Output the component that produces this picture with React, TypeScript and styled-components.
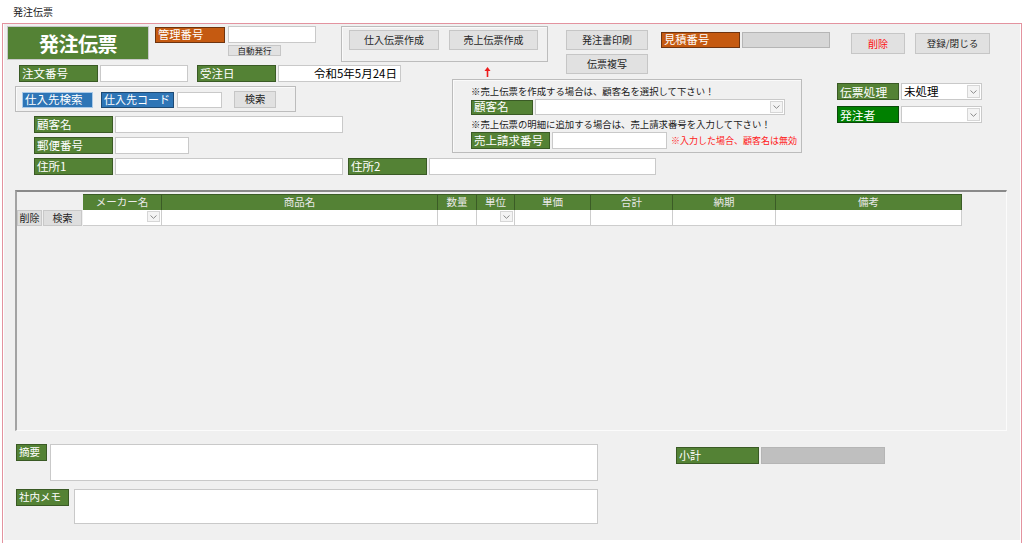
import styled, { createGlobalStyle } from "styled-components";

const jp = `"Noto Sans CJK JP", "Noto Sans", sans-serif`;

type Tone = "green" | "orange" | "blue" | "blueLight" | "bright";

const tones: Record<Tone, { bg: string; border: string }> = {
  green: { bg: "#548235", border: "#3a5a25" },
  orange: { bg: "#c55a11", border: "#6e3410" },
  blue: { bg: "#2e75b6", border: "#1d4a74" },
  blueLight: { bg: "#2e75b6", border: "#a9c9e8" },
  bright: { bg: "#008000", border: "#0b4a0b" },
};

const GlobalStyle = createGlobalStyle`
  html, body {
    margin: 0;
    padding: 0;
    background: #ffffff;
  }
  body {
    font-family: ${jp};
  }
  * {
    box-sizing: border-box;
  }
`;

const Window = styled.div`
  width: 1024px;
  height: 543px;
  background: #ffffff;
  overflow: hidden;
`;

const TitleBar = styled.div`
  height: 23px;
  padding: 7px 0 0 13px;
  font-size: 10px;
  line-height: 10px;
  color: #1a1a1a;
`;

const Frame = styled.div`
  margin-left: 2px;
  width: 1020px;
  height: 520px;
  border-top: 1px solid #e3939f;
  border-left: 1px solid #e3939f;
  border-right: 1px solid #e3939f;
  padding: 0 1px 3px 1px;
`;

const Body = styled.div`
  height: 516px;
  background: #f0f0f0;
  padding-top: 2px;
  font-family: ${jp};
`;

const Band = styled.div<{ $h?: number; $mt?: number }>`
  display: flex;
  align-items: flex-start;
  height: ${(p) => (p.$h ? `${p.$h}px` : "auto")};
  margin-top: ${(p) => p.$mt ?? 0}px;
`;

const Column = styled.div<{ $ml?: number; $mt?: number; $w?: number; $gap?: number }>`
  display: flex;
  flex-direction: column;
  flex: none;
  gap: ${(p) => p.$gap ?? 0}px;
  margin-left: ${(p) => p.$ml ?? 0}px;
  margin-top: ${(p) => p.$mt ?? 0}px;
  width: ${(p) => (p.$w ? `${p.$w}px` : "auto")};
`;

const Row = styled.div<{ $ml?: number; $mt?: number; $gap?: number }>`
  display: flex;
  align-items: center;
  flex: none;
  gap: ${(p) => p.$gap ?? 2}px;
  margin-left: ${(p) => p.$ml ?? 0}px;
  margin-top: ${(p) => p.$mt ?? 0}px;
`;

const TitleBlock = styled.div`
  flex: none;
  margin-left: 3px;
  width: 142px;
  height: 34px;
  background: #548235;
  border: 1px solid #c9c9c9;
  color: #ffffff;
  font-size: 20px;
  font-weight: 700;
  letter-spacing: -0.5px;
  display: flex;
  align-items: center;
  justify-content: center;
`;

const Label = styled.div<{ $w: number; $h?: number; $tone?: Tone; $size?: number; $ml?: number }>`
  flex: none;
  width: ${(p) => p.$w}px;
  height: ${(p) => p.$h ?? 17}px;
  margin-left: ${(p) => p.$ml ?? 0}px;
  background: ${(p) => tones[p.$tone ?? "green"].bg};
  border: 1px solid ${(p) => tones[p.$tone ?? "green"].border};
  color: #ffffff;
  font-size: ${(p) => p.$size ?? 11.5}px;
  line-height: 1;
  display: flex;
  align-items: center;
  padding-left: 2px;
  white-space: nowrap;
  overflow: hidden;
`;

const Field = styled.div<{ $w: number; $h?: number; $fill?: string; $right?: boolean; $ml?: number }>`
  flex: none;
  width: ${(p) => p.$w}px;
  height: ${(p) => p.$h ?? 17}px;
  margin-left: ${(p) => p.$ml ?? 0}px;
  background: ${(p) => p.$fill ?? "#ffffff"};
  border: 1px solid ${(p) => (p.$fill ? "#b5b5b5" : "#c9c9c9")};
  color: #000000;
  font-size: 11.5px;
  line-height: 1;
  display: flex;
  align-items: center;
  justify-content: ${(p) => (p.$right ? "flex-end" : "flex-start")};
  padding: 0 3px 0 2px;
  white-space: nowrap;
`;

const Combo = styled(Field)`
  padding-right: 1px;
`;

const DropBtn = styled.span`
  margin-left: auto;
  width: 13px;
  height: calc(100% - 2px);
  border: 1px solid #d6d6d6;
  background: #f4f4f4;
  display: flex;
  align-items: center;
  justify-content: center;
`;

const Button = styled.button<{ $w: number; $h?: number; $danger?: boolean; $size?: number; $ml?: number }>`
  flex: none;
  width: ${(p) => p.$w}px;
  height: ${(p) => p.$h ?? 20}px;
  margin: 0 0 0 ${(p) => p.$ml ?? 0}px;
  padding: 0;
  background: #e1e1e1;
  border: 1px solid #c6c6c6;
  color: ${(p) => (p.$danger ? "#ff1010" : "#1f1f1f")};
  font-family: ${jp};
  font-size: ${(p) => p.$size ?? 10}px;
  line-height: 1;
  white-space: nowrap;
`;

const GroupBox = styled.div<{ $w: number; $h: number; $ml?: number; $mt?: number }>`
  flex: none;
  width: ${(p) => p.$w}px;
  height: ${(p) => p.$h}px;
  margin-left: ${(p) => p.$ml ?? 0}px;
  margin-top: ${(p) => p.$mt ?? 0}px;
  border: 1px solid #bcbcbc;
  box-shadow: inset 1px 1px 0 #fafafa;
`;

const GroupInner = styled.div<{ $pt: number; $pl: number; $gap: number }>`
  display: flex;
  align-items: center;
  gap: ${(p) => p.$gap}px;
  padding: ${(p) => p.$pt}px 0 0 ${(p) => p.$pl}px;
`;

const NoticeBox = styled.div`
  flex: none;
  width: 350px;
  height: 74px;
  border: 1px solid #bcbcbc;
  box-shadow: inset 1px 1px 0 #fafafa;
  padding: 4px 0 0 18px;
  display: flex;
  flex-direction: column;
`;

const Note = styled.div<{ $red?: boolean; $mt?: number; $size?: number }>`
  font-size: ${(p) => p.$size ?? 9.4}px;
  line-height: 15px;
  height: 15px;
  margin-top: ${(p) => p.$mt ?? 0}px;
  color: ${(p) => (p.$red ? "#ff1a1a" : "#1a1a1a")};
  white-space: nowrap;
`;

const ArrowRow = styled.div`
  height: 14px;
  padding: 2px 0 0 32px;

  svg {
    display: block;
  }
`;

const Sheet = styled.div`
  margin: 15px 0 0 11px;
  width: 992px;
  height: 241px;
  border-top: 2px solid #8a8a8a;
  border-left: 2px solid #a3a3a3;
  border-right: 1px solid #fbfbfb;
  border-bottom: 1px solid #fbfbfb;
  padding-top: 2px;
`;

const SheetGrid = styled.div`
  display: grid;
  grid-template-columns: 66px 79px 276px 39px 38px 76px 82px 103px 186px;
  grid-template-rows: 16px 16px;
`;

const HeadCell = styled.div<{ $blank?: boolean }>`
  background: ${(p) => (p.$blank ? "transparent" : "#548235")};
  border-top: 1px solid ${(p) => (p.$blank ? "transparent" : "#3b5c26")};
  border-right: 1px solid ${(p) => (p.$blank ? "transparent" : "#3b5c26")};
  color: #e9e9e9;
  font-size: 10.5px;
  line-height: 1;
  display: flex;
  align-items: center;
  justify-content: center;
`;

const DataCell = styled.div`
  background: #ffffff;
  border-right: 1px solid #cdcdcd;
  border-bottom: 1px solid #cdcdcd;
  display: flex;
  align-items: stretch;
  justify-content: flex-end;
  padding: 1px;
`;

const RowHead = styled.div`
  display: flex;
  gap: 1px;
`;

const RowBtn = styled.button<{ $w: number }>`
  width: ${(p) => p.$w}px;
  height: 16px;
  margin: 0;
  padding: 0;
  background: #dedede;
  border: 1px solid #c8c8c8;
  font-family: ${jp};
  font-size: 10px;
  line-height: 1;
  color: #1f1f1f;
`;

const Footer = styled.div`
  display: flex;
  align-items: flex-start;
  margin-top: 13px;
`;

const MemoRow = styled.div<{ $mt?: number; $gap: number }>`
  display: flex;
  align-items: flex-start;
  gap: ${(p) => p.$gap}px;
  margin-top: ${(p) => p.$mt ?? 0}px;
`;

const Chevron = () => (
  <svg width="7" height="4" viewBox="0 0 7 4">
    <path d="M0.5 0.5 L3.5 3.3 L6.5 0.5" fill="none" stroke="#8a8a8a" strokeWidth="1" />
  </svg>
);

const UpArrow = () => (
  <svg width="7" height="10" viewBox="0 0 7 10">
    <path d="M3.5 0 L6.5 4 L4.3 4 L4.3 10 L2.7 10 L2.7 4 L0.5 4 Z" fill="#ee1c1c" />
  </svg>
);

const columns = ["メーカー名", "商品名", "数量", "単位", "単価", "合計", "納期", "備考"];
const comboColumns = ["メーカー名", "単位"];

export default function App() {
  return (
    <Window>
      <GlobalStyle />
      <TitleBar>発注伝票</TitleBar>
      <Frame>
        <Body>
          <Band $h={39}>
            <TitleBlock>発注伝票</TitleBlock>
            <Column $ml={6}>
              <Row $gap={3}>
                <Label $w={70} $h={16} $tone="orange" $size={11.3}>
                  管理番号
                </Label>
                <Field $w={88} $h={17} />
              </Row>
              <Button $w={53} $h={11} $size={8.5} $ml={73} style={{ marginTop: 2 }}>
                自動発行
              </Button>
            </Column>
            <GroupBox $w={207} $h={36} $ml={25}>
              <GroupInner $pt={3} $pl={7} $gap={10}>
                <Button $w={90} $h={20}>仕入伝票作成</Button>
                <Button $w={89} $h={20}>売上伝票作成</Button>
              </GroupInner>
            </GroupBox>
            <Column $ml={18} $mt={4} $gap={4}>
              <Button $w={82} $h={20}>発注書印刷</Button>
              <Button $w={82} $h={20}>伝票複写</Button>
            </Column>
            <Row $ml={13} $mt={6} $gap={2}>
              <Label $w={79} $h={16} $tone="orange" $size={11.3}>
                見積番号
              </Label>
              <Field $w={88} $h={16} $fill="#d6d6d6" />
            </Row>
            <Row $ml={21} $mt={7} $gap={10}>
              <Button $w={54} $h={21} $danger>
                削除
              </Button>
              <Button $w={75} $h={21} $size={9.6}>
                登録/閉じる
              </Button>
            </Row>
          </Band>

          <Band $h={88}>
            <Column $w={397}>
              <Row $ml={15} $gap={2}>
                <Label $w={79}>注文番号</Label>
                <Field $w={88} />
                <Label $w={79} $ml={7}>
                  受注日
                </Label>
                <Field $w={123} $right>
                  令和5年5月24日
                </Field>
              </Row>
              <GroupBox $w={281} $h={26} $ml={11} $mt={4}>
                <GroupInner $pt={4} $pl={6} $gap={0}>
                  <Label $w={71} $h={16} $tone="blueLight" $size={11.5}>
                    仕入先検索
                  </Label>
                  <Label $w={73} $h={16} $tone="blue" $size={11} $ml={8}>
                    仕入先コード
                  </Label>
                  <Field $w={45} $h={16} $ml={3} />
                  <Button $w={42} $h={17} $ml={12} $size={10.3}>
                    検索
                  </Button>
                </GroupInner>
              </GroupBox>
              <Row $ml={30} $mt={4}>
                <Label $w={79}>顧客名</Label>
                <Field $w={228} />
              </Row>
              <Row $ml={30} $mt={4}>
                <Label $w={79}>郵便番号</Label>
                <Field $w={74} />
              </Row>
            </Column>

            <Column $ml={51}>
              <ArrowRow>
                <UpArrow />
              </ArrowRow>
              <NoticeBox>
                <Note>※売上伝票を作成する場合は、顧客名を選択して下さい！</Note>
                <Row>
                  <Label $w={62} $h={15}>
                    顧客名
                  </Label>
                  <Combo $w={250} $h={16}>
                    <DropBtn>
                      <Chevron />
                    </DropBtn>
                  </Combo>
                </Row>
                <Note $mt={2}>※売上伝票の明細に追加する場合は、売上請求番号を入力して下さい！</Note>
                <Row>
                  <Label $w={79} $h={17}>
                    売上請求番号
                  </Label>
                  <Field $w={115} $h={17} />
                  <Note $red $size={9} style={{ marginLeft: 2 }}>
                    ※入力した場合、顧客名は無効
                  </Note>
                </Row>
              </NoticeBox>
            </Column>

            <Column $ml={35} $mt={18} $gap={6}>
              <Row>
                <Label $w={62} $size={11.8}>
                  伝票処理
                </Label>
                <Combo $w={81}>
                  未処理
                  <DropBtn>
                    <Chevron />
                  </DropBtn>
                </Combo>
              </Row>
              <Row>
                <Label $w={62} $tone="bright" $size={11.8}>
                  発注者
                </Label>
                <Combo $w={81}>
                  <DropBtn>
                    <Chevron />
                  </DropBtn>
                </Combo>
              </Row>
            </Column>
          </Band>

          <Row $ml={30} $mt={5}>
            <Label $w={79}>住所1</Label>
            <Field $w={228} />
            <Label $w={79} $ml={3}>
              住所2
            </Label>
            <Field $w={227} />
          </Row>

          <Sheet>
            <SheetGrid>
              <HeadCell $blank />
              {columns.map((c) => (
                <HeadCell key={c}>{c}</HeadCell>
              ))}
              <RowHead>
                <RowBtn $w={25}>削除</RowBtn>
                <RowBtn $w={39}>検索</RowBtn>
              </RowHead>
              {columns.map((c) => (
                <DataCell key={c}>
                  {comboColumns.includes(c) && (
                    <DropBtn>
                      <Chevron />
                    </DropBtn>
                  )}
                </DataCell>
              ))}
            </SheetGrid>
          </Sheet>

          <Footer>
            <Column $ml={12}>
              <MemoRow $gap={3}>
                <Label $w={31} $size={10.5}>
                  摘要
                </Label>
                <Field $w={548} $h={37} />
              </MemoRow>
              <MemoRow $gap={5} $mt={8}>
                <Label $w={53} $size={10.5}>
                  社内メモ
                </Label>
                <Field $w={524} $h={35} />
              </MemoRow>
            </Column>
            <Row $ml={78} $mt={3}>
              <Label $w={83} $size={11}>
                小計
              </Label>
              <Field $w={124} $fill="#bfbfbf" />
            </Row>
          </Footer>
        </Body>
      </Frame>
    </Window>
  );
}
